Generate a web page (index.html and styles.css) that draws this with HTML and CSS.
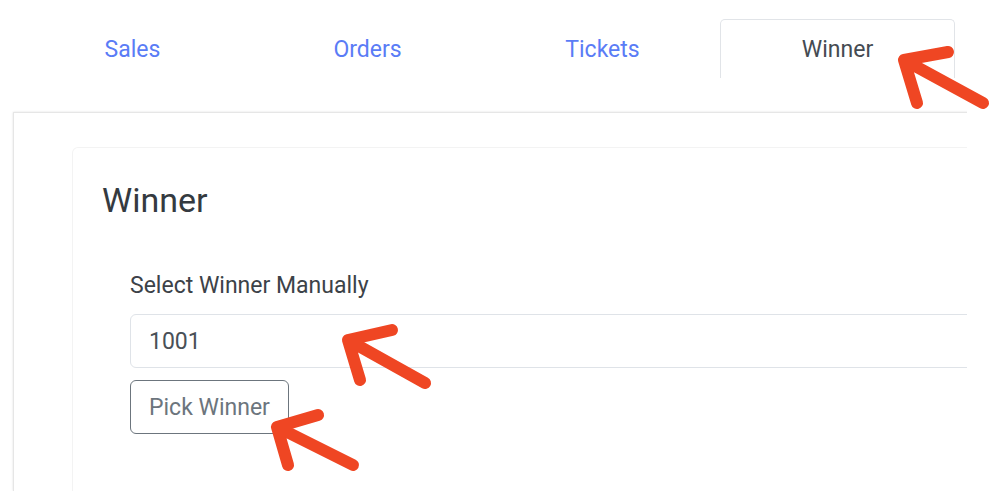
FILE: index.html
```html
<!DOCTYPE html>
<html lang="en">
<head>
  <meta charset="UTF-8">
  <title>Winner</title>
  <link rel="stylesheet" href="styles.css">
</head>
<body>
  <div class="frame">
    <!-- tabs -->
    <nav class="tabs">
      <a class="tab">Sales</a>
      <a class="tab">Orders</a>
      <a class="tab">Tickets</a>
      <a class="tab active">Winner</a>
    </nav>

    <!-- tab content -->
    <div class="panel">
      <div class="card">
        <h2 class="card-title">Winner</h2>
        <div class="form">
          <label class="form-label" for="winner">Select Winner Manually</label>
          <input class="form-input" id="winner" type="text" value="1001">
          <button class="btn-outline">Pick Winner</button>
        </div>
      </div>
    </div>
  </div>

  <!-- red arrows drawn on top of the screenshot -->
  <svg class="marks" width="999" height="491" viewBox="0 0 999 491">
    <g fill="none" stroke="#ef4623" stroke-width="12" stroke-linecap="round" stroke-linejoin="round">
      <path d="M948 52 L904 60 L917 103 M904 60 L983 103" />
      <path d="M392 330 L348 340 L360 380 M348 340 L425 383" />
      <path d="M318 415 L277 427 L288 465 M277 427 L353 465" />
    </g>
  </svg>
</body>
</html>
```

FILE: styles.css
```css
html, body {
  margin: 0;
  height: 491px;
  overflow: hidden;
  background: #fff;
}
body {
  font-family: Roboto, "Liberation Sans", sans-serif;
  position: relative;
}

/* everything right of 967px is cropped in the shot */
.frame {
  width: 967px;
  height: 491px;
  overflow: hidden;
  padding: 19px 0 0 13px;
  box-sizing: border-box;
}

.tabs {
  display: flex;
  width: 940px;
  margin-left: 2px;
}
.tab {
  flex: 1;
  height: 59px;
  display: flex;
  align-items: center;
  justify-content: center;
  font-size: 23px;
  color: #5a7cf6;
  border: 1px solid transparent;
  border-bottom: none;
  border-radius: 5px 5px 0 0;
  box-sizing: border-box;
  cursor: pointer;
}
.tab.active {
  color: #454b52;
  border-color: #e1e4e8;
}

.panel {
  margin-top: 34px;
  width: 1100px;
  height: 379px;
  border: 1px solid #e6e6e6;
  border-bottom: none;
  box-shadow: 0 0 2px rgba(0,0,0,0.12);
  padding: 34px 0 0 58px;
  box-sizing: border-box;
}

.card {
  height: 344px;
  border: 1px solid #f3f3f3;
  border-bottom: none;
  border-radius: 6px 6px 0 0;
  padding: 32px 0 0 29px;
  box-sizing: border-box;
}
.card-title {
  margin: 0;
  font-size: 34px;
  font-weight: 400;
  line-height: 40px;
  color: #343a40;
}

.form {
  padding: 50px 0 0 28px;
  display: flex;
  flex-direction: column;
  align-items: flex-start;
}
.form-label {
  font-size: 23px;
  line-height: 32px;
  color: #3c4248;
}
.form-input {
  margin-top: 12px;
  width: 1000px;
  height: 54px;
  padding: 0 18px;
  box-sizing: border-box;
  border: 1px solid #dfe3e8;
  border-radius: 6px;
  font-family: inherit;
  font-size: 23px;
  color: #495057;
  outline: none;
}
.btn-outline {
  margin-top: 12px;
  height: 54px;
  padding: 0 18px;
  border: 1px solid #6c757d;
  border-radius: 6px;
  background: #fff;
  font-family: inherit;
  font-size: 23px;
  color: #6c757d;
  cursor: pointer;
}

.marks {
  position: absolute;
  top: 0;
  left: 0;
  pointer-events: none;
}
```
